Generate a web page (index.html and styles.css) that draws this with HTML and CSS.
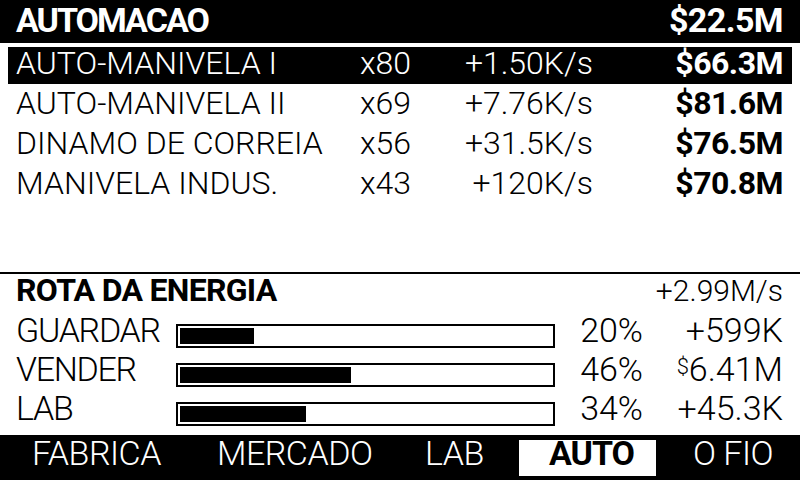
FILE: index.html
```html
<!DOCTYPE html>
<html>
<head>
<meta charset="utf-8">
<link rel="stylesheet" href="styles.css">
</head>
<body>
<div class="screen">
  <header class="topbar">
    <span class="title">AUTOMACAO</span>
    <span class="money">$22.5M</span>
  </header>
  <ul class="list">
    <li class="row sel"><span class="name">AUTO-MANIVELA I</span><span class="qty">x80</span><span class="rate">+1.50K/s</span><span class="cost">$66.3M</span></li>
    <li class="row"><span class="name">AUTO-MANIVELA II</span><span class="qty">x69</span><span class="rate">+7.76K/s</span><span class="cost">$81.6M</span></li>
    <li class="row"><span class="name">DINAMO DE CORREIA</span><span class="qty">x56</span><span class="rate">+31.5K/s</span><span class="cost">$76.5M</span></li>
    <li class="row"><span class="name">MANIVELA INDUS.</span><span class="qty">x43</span><span class="rate">+120K/s</span><span class="cost">$70.8M</span></li>
  </ul>
  <section class="route">
    <div class="route-head"><span class="rt">ROTA DA ENERGIA</span><span class="rtotal">+2.99M/s</span></div>
    <div class="brow"><span class="blabel">GUARDAR</span><span class="bar"><span class="fill" style="width:20%"></span></span><span class="pct">20%</span><span class="bval">+599K</span></div>
    <div class="brow"><span class="blabel">VENDER</span><span class="bar"><span class="fill" style="width:46%"></span></span><span class="pct">46%</span><span class="bval"><span class="cur">$</span>6.41M</span></div>
    <div class="brow"><span class="blabel">LAB</span><span class="bar"><span class="fill" style="width:34%"></span></span><span class="pct">34%</span><span class="bval">+45.3K</span></div>
  </section>
  <nav class="tabs">
    <span class="tab">FABRICA</span>
    <span class="tab">MERCADO</span>
    <span class="tab">LAB</span>
    <span class="tab active">AUTO</span>
    <span class="tab">O FIO</span>
  </nav>
</div>
</body>
</html>
```

FILE: styles.css
```css
* { box-sizing: border-box; margin: 0; padding: 0; }
html, body { background: #fff; }
body {
  width: 800px;
  height: 480px;
  overflow: hidden;
  font-family: "Roboto", "Liberation Sans", sans-serif;
  color: #000;
}
.screen {
  width: 800px;
  height: 480px;
  display: flex;
  flex-direction: column;
}
.topbar {
  height: 43px;
  flex: none;
  background: #000;
  color: #fff;
  display: flex;
  justify-content: space-between;
  align-items: flex-start;
  padding: 0 17px 0 16px;
  font-weight: 700;
  font-size: 34px;
  line-height: 40px;
}
.title { letter-spacing: -2px; }
.money { letter-spacing: -0.6px; }
.list {
  list-style: none;
  margin: 4px 8px 0;
  flex: 1;
}
.row {
  display: grid;
  grid-template-columns: 344px 90px 143px 1fr;
  height: 37px;
  margin-bottom: 3px;
  padding: 0 9px 0 8px;
  font-size: 32px;
  font-weight: 300;
  line-height: 32px;
}
.row.sel { background: #000; color: #fff; }
.rate { text-align: right; }
.cost { text-align: right; font-weight: 700; letter-spacing: -0.5px; }
.route {
  flex: none;
  height: 163px;
  border-top: 2px solid #000;
  padding: 0 17px 0 16px;
}
.route-head {
  display: flex;
  justify-content: space-between;
  align-items: baseline;
  height: 39px;
}
.rt { font-size: 32px; line-height: 32px; font-weight: 700; letter-spacing: -0.7px; }
.rtotal { font-size: 30px; line-height: 32px; font-weight: 300; }
.brow {
  display: grid;
  grid-template-columns: 160px 379px 88px 1fr;
  height: 39px;
  align-items: start;
  font-size: 34px;
  line-height: 35px;
  font-weight: 300;
}
.blabel { letter-spacing: -1.3px; }
.bar {
  margin-top: 11px;
  height: 24px;
  border: 2px solid #000;
  padding: 2px;
  display: flex;
}
.fill { background: #000; height: 100%; }
.pct, .bval { text-align: right; }
.cur { font-size: 22px; vertical-align: top; line-height: 30px; }
.tabs {
  flex: none;
  height: 45px;
  background: #000;
  color: #fff;
  display: grid;
  grid-template-columns: 185px 208px 94px 174px 1fr;
  align-items: start;
  justify-items: start;
  padding-left: 32px;
  font-size: 34px;
  line-height: 36px;
  font-weight: 300;
  letter-spacing: -0.5px;
}
.tab { white-space: nowrap; }
.tab.active {
  background: #fff;
  color: #000;
  font-weight: 700;
  margin-top: 5px;
  width: 137px;
  padding-left: 30px;
  height: 36px;
  line-height: 27px;
  letter-spacing: -1px;
}
```
